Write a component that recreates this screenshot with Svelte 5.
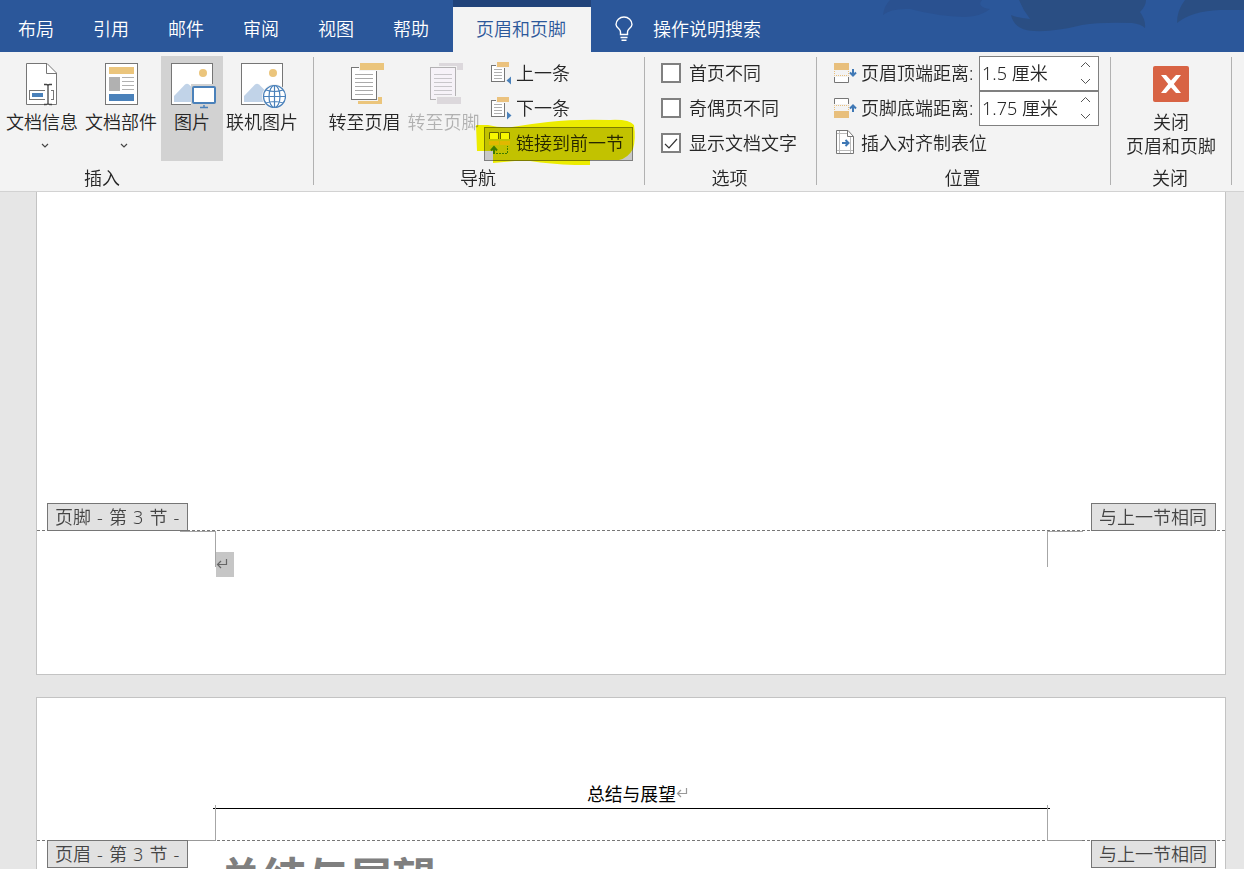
<script>
  const tabs = ["布局", "引用", "邮件", "审阅", "视图", "帮助"];

  let options = $state([
    { label: "首页不同", checked: false },
    { label: "奇偶页不同", checked: false },
    { label: "显示文档文字", checked: true },
  ]);
</script>

{#snippet chevron()}
  <svg class="chevron" width="8" height="5" viewBox="0 0 8 5">
    <path d="M1 1L4 4L7 1" fill="none" stroke="#444" stroke-width="1.2" />
  </svg>
{/snippet}

{#snippet pictureFrame()}
  <rect x="3.5" y="1.5" width="41" height="41" fill="#fff" stroke="#767676" />
  <circle cx="35" cy="11" r="4" fill="#ebc57c" />
  <path d="M6 40V34L17 22.5Q19 21 21 22.5L36 37V40Z" fill="#c1d3e8" />
{/snippet}

{#snippet smallPage()}
  <rect x="1.5" y="4.5" width="13" height="16" fill="#fff" stroke="#767676" />
  <path d="M4 8.5H12M4 11.5H12M4 14.5H12M4 17.5H12" stroke="#b0b0b0" />
  <rect x="6" y="0" width="14" height="7" fill="#f3f3f3" />
  <rect x="7" y="1" width="12" height="5" fill="#ebc27e" />
{/snippet}

{#snippet mark()}
  <svg class="mark" width="12" height="11" viewBox="0 0 12 11">
    <path d="M10.5 1V6.5H1.5M5 3L1.5 6.5L5 10" fill="none" stroke="currentColor" stroke-width="1.2" />
  </svg>
{/snippet}

{#snippet spin(value)}
  <div class="spin">
    <span>{value}</span>
    <svg width="11" height="26" viewBox="0 0 11 26">
      <path d="M1 6L5.5 1.5L10 6M1 18L5.5 22.5L10 18" fill="none" stroke="#555" />
    </svg>
  </div>
{/snippet}

<div class="app">
  <nav class="tabs">
    <svg class="swirl" width="384" height="52" viewBox="0 0 384 52">
      <path d="M30 0Q24 6 23 15Q31 8 50 9Q76 16 105 17Q122 16 130 9Q116 7 122 0Z" fill="#2a5190" />
      <path
        d="M159 0Q163 10 170 19Q158 18 151 15Q154 30 174 31Q195 32 222 25Q240 22 272 23Q281 24 285 28Q286 20 280 12Q286 6 286 0Z"
        fill="#2a4e83"
      />
      <path d="M325 0Q317 10 317 23Q332 11 360 10L384 10V0Z" fill="#2a4e83" />
    </svg>
    {#each tabs as tab}
      <span class="tab">{tab}</span>
    {/each}
    <span class="tab active">页眉和页脚</span>
    <svg class="bulb" width="18" height="26" viewBox="0 0 18 26">
      <path
        d="M5.5 18.5V16Q5.5 14.5 4 13Q1 10.5 1 8.5A8 7.5 0 0 1 17 8.5Q17 10.5 14 13Q12.5 14.5 12.5 16V18.5ZM5.5 21.5H12.5M6.5 24.3H11.5"
        fill="none"
        stroke="#fff"
        stroke-width="1.4"
      />
    </svg>
    <span class="tell-me">操作说明搜索</span>
  </nav>

  <div class="ribbon">
    <section class="group insert">
      <div class="body">
        <button class="big doc-info">
          <svg width="48" height="48" viewBox="0 0 48 48">
            <path d="M8.5 1.5H29L38.5 11V42.5H8.5Z" fill="#fff" stroke="#767676" />
            <path d="M28.5 1.5V11.5H38.5" fill="none" stroke="#767676" />
            <rect x="11.5" y="28.5" width="24" height="9" fill="#fff" stroke="#767676" />
            <rect x="14" y="31" width="11" height="4" fill="#4a81ba" />
            <rect x="27" y="21" width="6" height="23" fill="#fff" />
            <path
              d="M26 22.5H28.5Q30 22.5 30 24V41Q30 42.5 28.5 42.5H26M34 22.5H31.5Q30 22.5 30 24M30 41Q30 42.5 31.5 42.5H34"
              fill="none"
              stroke="#444"
              stroke-width="1.3"
            />
          </svg>
          <span>文档信息</span>
          {@render chevron()}
        </button>
        <button class="big parts">
          <svg width="48" height="48" viewBox="0 0 48 48">
            <rect x="8.5" y="1.5" width="32" height="41" fill="#fff" stroke="#767676" />
            <rect x="12" y="5" width="25" height="7" fill="#ebc57c" />
            <rect x="12" y="15" width="11" height="14" fill="#b1b1b1" />
            <path d="M25 15.5H37M25 19.5H37M25 23.5H37M25 27.5H37" stroke="#b1b1b1" />
            <rect x="12" y="32" width="25" height="7" fill="#4a81ba" />
          </svg>
          <span>文档部件</span>
          {@render chevron()}
        </button>
        <button class="big picture selected">
          <svg width="48" height="48" viewBox="0 0 48 48">
            {@render pictureFrame()}
            <path d="M23 22H46V43H23Z" fill="#d2d2d2" />
            <rect x="25" y="25" width="22" height="16" rx="1" fill="#fff" stroke="#4a81ba" stroke-width="2" />
            <path d="M36 43V45.5M32 45.5H40" stroke="#4a81ba" stroke-width="1.5" />
          </svg>
          <span>图片</span>
        </button>
        <button class="big online">
          <svg width="48" height="48" viewBox="0 0 48 48">
            {@render pictureFrame()}
            <circle cx="36.5" cy="34.5" r="12.5" fill="#f3f3f3" />
            <g fill="#fff" stroke="#4a81ba" stroke-width="1.2">
              <circle cx="36.5" cy="34.5" r="11" />
              <ellipse cx="36.5" cy="34.5" rx="5.5" ry="11" />
              <path d="M25.5 34.5H47.5M36.5 23.5V45.5M28 28Q36.5 31 45 28M28 41Q36.5 38 45 41" fill="none" />
            </g>
          </svg>
          <span>联机图片</span>
        </button>
      </div>
      <div class="label">插入</div>
    </section>

    <section class="group navigate">
      <div class="body">
        <button class="big goto">
          <svg width="48" height="48" viewBox="0 0 48 48">
            <rect x="17" y="35" width="24" height="7" fill="#ebc57c" />
            <rect x="10" y="5" width="27" height="34" fill="#f3f3f3" />
            <rect x="10.5" y="5.5" width="25" height="32" fill="#fff" stroke="#767676" />
            <path d="M14 12.5H32M14 16.5H32M14 20.5H32M14 24.5H32M14 28.5H32M14 32.5H32" stroke="#aaa" />
            <rect x="18" y="0" width="26" height="9" fill="#f3f3f3" />
            <rect x="19" y="1" width="24" height="7" fill="#ebc57c" />
          </svg>
          <span>转至页眉</span>
        </button>
        <button class="big goto" disabled>
          <svg width="48" height="48" viewBox="0 0 48 48">
            <rect x="19" y="1" width="24" height="7" fill="#dcd8dc" />
            <rect x="9" y="4" width="28" height="35" fill="#f3f3f3" />
            <rect x="10.5" y="5.5" width="25" height="32" fill="#f6f2f8" stroke="#b3b1b3" />
            <path d="M14 12.5H32M14 16.5H32M14 20.5H32M14 24.5H32M14 28.5H32M14 32.5H32" stroke="#c8c6ca" />
            <rect x="16" y="34" width="26" height="9" fill="#f3f3f3" />
            <rect x="17" y="35" width="24" height="7" fill="#dcd8dc" />
          </svg>
          <span>转至页脚</span>
        </button>
        <div class="rows">
          <button class="row">
            <svg width="24" height="25" viewBox="0 0 24 25">
              {@render smallPage()}
              <path d="M21 15.5V23.5L16.5 19.5Z" fill="#4a81ba" />
            </svg>
            <span>上一条</span>
          </button>
          <button class="row">
            <svg width="24" height="25" viewBox="0 0 24 25">
              {@render smallPage()}
              <path d="M17 15.5V23.5L21.5 19.5Z" fill="#4a81ba" />
            </svg>
            <span>下一条</span>
          </button>
          <button class="row linked">
            <svg width="24" height="25" viewBox="0 0 24 25" overflow="visible">
              <path d="M-0.5 7V0.5H8.5V7M10.5 7V0.5H19.5V7" fill="#fff" stroke="#666" />
              <path d="M-1 9H9V13H-1ZM10 9H20V13H10Z" fill="#e8bd78" />
              <path d="M4 22V16M1 18.5L4 15L7 18.5" fill="none" stroke="#3f7fb5" stroke-width="2" />
              <path d="M6 21.5H17.5V14" fill="none" stroke="#3f7fb5" stroke-dasharray="2 1" />
            </svg>
            <span>链接到前一节</span>
            <svg class="marker" width="160" height="48" viewBox="476 119 160 48">
              <path
                d="M476 125H488Q500 128 512 127Q530 124 548 122Q575 119 610 120Q629 119 634 125Q636 139 633 149Q628 158 619 160H590V165H575Q550 164 530 161H515L493 163V151H477Z"
                fill="#f8f800"
              />
            </svg>
          </button>
        </div>
      </div>
      <div class="label">导航</div>
    </section>

    <section class="group options">
      <div class="body">
        <div class="rows">
          {#each options as opt}
            <button class="row" onclick={() => (opt.checked = !opt.checked)}>
              <span class="box">
                {#if opt.checked}
                  <svg width="16" height="16" viewBox="0 0 16 16">
                    <path d="M2 9L6 13L14 4" fill="none" stroke="#333" stroke-width="1.2" />
                  </svg>
                {/if}
              </span>
              <span>{opt.label}</span>
            </button>
          {/each}
        </div>
      </div>
      <div class="label">选项</div>
    </section>

    <section class="group position">
      <div class="body">
        <div class="rows">
          <div class="row">
            <svg width="24" height="25" viewBox="0 0 24 25">
              <rect x="0" y="2" width="15" height="7" fill="#e8bf7c" />
              <path d="M0.5 10V14.5H14.5V10" fill="none" stroke="#e8bf7c" stroke-dasharray="1 1" />
              <path d="M0.5 16V21.5H14.5V16" fill="#fff" stroke="#767676" />
              <path d="M19 8V14M16 11.5L19 14.5L22 11.5" fill="none" stroke="#3f78b5" stroke-width="2" />
            </svg>
            <span class="name">页眉顶端距离:</span>
            {@render spin("1.5 厘米")}
          </div>
          <div class="row">
            <svg width="24" height="25" viewBox="0 0 24 25">
              <path d="M0.5 8V2.5H14.5V8" fill="#fff" stroke="#767676" />
              <path d="M0.5 14V9.5H14.5V14" fill="none" stroke="#e8bf7c" stroke-dasharray="1 1" />
              <rect x="0" y="15" width="15" height="7" fill="#e8bf7c" />
              <path d="M19 16V10M16 12.5L19 9.5L22 12.5" fill="none" stroke="#3f78b5" stroke-width="2" />
            </svg>
            <span class="name">页脚底端距离:</span>
            {@render spin("1.75 厘米")}
          </div>
          <div class="row">
            <svg width="24" height="25" viewBox="0 0 24 25" overflow="visible">
              <path d="M2.5 -0.5H14L19.5 5.5V22.5H2.5Z" fill="#fff" stroke="#767676" />
              <path d="M13.5 -0.5V5.5H19.5" fill="none" stroke="#767676" />
              <path d="M5.5 0V22M16.5 6V22M3 2.5H13M3 19.5H19" stroke="#bbb" />
              <path d="M8 12H14M11.5 9L14.5 12L11.5 15" fill="none" stroke="#3f78b5" stroke-width="2" />
            </svg>
            <span>插入对齐制表位</span>
          </div>
        </div>
      </div>
      <div class="label">位置</div>
    </section>

    <section class="group close">
      <div class="body">
        <button class="big">
          <svg width="48" height="48" viewBox="0 0 48 48">
            <rect x="6" y="4" width="36" height="36" rx="2" fill="#d86344" />
            <path d="M14 13H19L24 18.5L29 13H34L26.8 22L34 31H29L24 25.5L19 31H14L21.2 22Z" fill="#fff" />
          </svg>
          <span>关闭</span>
          <span>页眉和页脚</span>
        </button>
      </div>
      <div class="label">关闭</div>
    </section>
  </div>

  <main class="document">
    <article class="page first">
      <div class="boundary">
        <span class="tag section">页脚 - 第 3 节 -</span>
        <span class="tag">与上一节相同</span>
      </div>
      <div class="footer-area">
        <i class="corner left"></i>
        <span class="selection">{@render mark()}</span>
        <i class="corner right"></i>
      </div>
    </article>

    <article class="page second">
      <div class="header-text">总结与展望{@render mark()}</div>
      <div class="header-rule"></div>
      <div class="header-area"></div>
      <div class="boundary">
        <i class="edge"></i>
        <span class="tag section">页眉 - 第 3 节 -</span>
        <span class="tag">与上一节相同</span>
      </div>
      <h1>总结与展望{@render mark()}</h1>
    </article>
  </main>
</div>

<style>
  :global(body) {
    overflow: hidden;
  }
  .app {
    width: 1244px;
    height: 869px;
    display: flex;
    flex-direction: column;
    overflow: hidden;
    font-family: "Noto Sans", "Noto Sans CJK SC", sans-serif;
    font-size: 18px;
    font-weight: 350;
    color: #262626;
  }
  svg {
    display: block;
    flex: none;
  }
  button {
    font: inherit;
    color: inherit;
    background: transparent;
    border: none;
    padding: 0;
  }
  span {
    white-space: nowrap;
  }

  .tabs {
    position: relative;
    display: flex;
    height: 52px;
    flex: none;
    padding-left: 18px;
    box-sizing: border-box;
    line-height: 58px;
    background: #2b579a;
    color: #fff;
  }
  .swirl {
    position: absolute;
    top: 0;
    right: 0;
  }
  .tab {
    width: 75px;
  }
  .tab.active {
    width: 138px;
    margin-left: -15px;
    padding-right: 2px;
    height: 52px;
    line-height: 44px;
    box-sizing: border-box;
    border-top: 7px solid #21437a;
    text-align: center;
    background: #f3f3f3;
    color: #2b579a;
  }
  .bulb {
    margin: 16px 0 0 24px;
  }
  .tell-me {
    margin-left: 20px;
  }

  .ribbon {
    display: flex;
    height: 140px;
    flex: none;
    box-sizing: border-box;
    background: #f3f3f3;
    border-bottom: 1px solid #d2d2d2;
  }
  .group {
    display: flex;
    flex-direction: column;
    flex: none;
    box-sizing: border-box;
    height: 128px;
    margin-top: 5px;
    border-right: 1px solid #b1b1b1;
  }
  .insert {
    width: 314px;
  }
  .navigate {
    width: 331px;
  }
  .options {
    width: 172px;
  }
  .position {
    width: 294px;
  }
  .close {
    width: 121px;
  }
  .body {
    display: flex;
    height: 106px;
    flex: none;
    margin-top: -1px;
  }
  .label {
    padding-right: 2px;
    line-height: 32px;
    text-align: center;
  }
  .insert .label {
    width: 204px;
  }

  .big {
    display: flex;
    flex-direction: column;
    align-items: center;
    height: 105px;
    padding-top: 6px;
    line-height: 24px;
  }
  .big .chevron {
    margin: 9px 0 0 6px;
  }
  .doc-info {
    width: 84px;
  }
  .parts {
    width: 74px;
  }
  .picture {
    width: 62px;
    margin-left: 3px;
  }
  .online {
    width: 78px;
  }
  .selected {
    background: #d2d2d2;
  }
  .goto {
    width: 79px;
  }
  .navigate .body {
    padding-left: 11px;
  }
  .navigate .rows {
    margin-left: 1px;
  }
  .big:disabled {
    color: #b1b1b1;
  }
  .close .big {
    width: 120px;
  }

  .rows {
    display: flex;
    flex-direction: column;
  }
  .row {
    position: relative;
    display: flex;
    align-items: center;
    height: 35px;
    line-height: 24px;
  }
  .row span {
    margin-bottom: 2px;
  }
  .navigate .row {
    width: 149px;
    padding-left: 6px;
    gap: 2px;
  }
  .linked {
    height: 34px;
    margin-top: 1px;
    box-sizing: border-box;
    background: #c8c8c8;
    box-shadow: inset 0 0 0 1px #7f7f7f;
  }
  .marker {
    position: absolute;
    left: -8px;
    top: -8px;
    mix-blend-mode: multiply;
  }
  .options .body {
    padding-left: 16px;
  }
  .options .row {
    gap: 8px;
  }
  .box {
    width: 20px;
    height: 20px;
    box-sizing: border-box;
    border: 2px solid #808080;
    background: #fff;
  }
  .position .body {
    padding-left: 17px;
  }
  .position .row {
    gap: 3px;
  }
  .name {
    width: 115px;
  }
  .spin {
    display: flex;
    align-items: center;
    justify-content: space-between;
    width: 120px;
    height: 35px;
    padding: 0 7px 0 2px;
    box-sizing: border-box;
    border: 1px solid #808080;
    background: #fff;
  }

  .document {
    flex: 1;
    display: flex;
    flex-direction: column;
    gap: 22px;
    padding-left: 36px;
    background: #e6e6e6;
    overflow: hidden;
  }
  .page {
    width: 1190px;
    flex: none;
    box-sizing: border-box;
    background: #fff;
    border: 1px solid #c3c3c3;
  }
  .first {
    height: 483px;
    padding-top: 311px;
    border-top: none;
  }
  .second {
    height: 300px;
    padding-top: 82px;
  }
  .boundary {
    position: relative;
    display: flex;
    justify-content: space-between;
    height: 28px;
    padding: 0 9px 0 10px;
    background: repeating-linear-gradient(90deg, #777 0 3px, #fff 3px 5px) 0 0 / 100% 1px no-repeat;
  }
  .first .boundary {
    background-position: 0 100%;
  }
  .tag {
    width: 125px;
    height: 28px;
    box-sizing: border-box;
    padding: 0 7px;
    line-height: 26px;
    border: 1px solid #767676;
    background: #e1e1e1;
    color: #444;
  }
  .section {
    width: 141px;
    word-spacing: 1.4px;
  }
  .edge {
    position: absolute;
    left: 151px;
    right: 143px;
    top: 0;
    height: 1px;
    background: linear-gradient(90deg, #999 28px, transparent 28px calc(100% - 35px), #999 calc(100% - 35px));
  }
  .footer-area {
    display: flex;
    height: 46px;
    padding: 0 142px 0 143px;
  }
  .corner {
    width: 36px;
    height: 36px;
    box-sizing: border-box;
    border-top: 1px solid #a6a6a6;
  }
  .left {
    border-right: 1px solid #a6a6a6;
  }
  .right {
    margin-left: auto;
    border-left: 1px solid #a6a6a6;
  }
  .selection {
    width: 18px;
    height: 25px;
    margin-top: 21px;
    box-sizing: border-box;
    padding-top: 6px;
    background: #c6c6c6;
    color: #666;
  }
  .header-text {
    display: flex;
    align-items: center;
    height: 28px;
    padding-left: 550px;
    font-weight: 400;
    font-size: 17.8px;
    line-height: 26px;
    color: #000;
  }
  .header-text .mark {
    margin-bottom: 4px;
    color: #999;
  }
  .header-rule {
    height: 1px;
    margin: 0 175px 0 176px;
    background: #000;
  }
  .header-area {
    height: 35px;
    margin: -4px 177px 0 178px;
    border: solid #a6a6a6;
    border-width: 0 1px;
  }
  h1 {
    display: flex;
    align-items: center;
    margin: -21px 0 0 182px;
    font-size: 43.4px;
    line-height: 62px;
    font-weight: 700;
    color: #7f7f7f;
  }
  h1 .mark,
  h1 :global(.mark) {
    width: 24px;
    height: 22px;
    margin-left: 4px;
  }
</style>
